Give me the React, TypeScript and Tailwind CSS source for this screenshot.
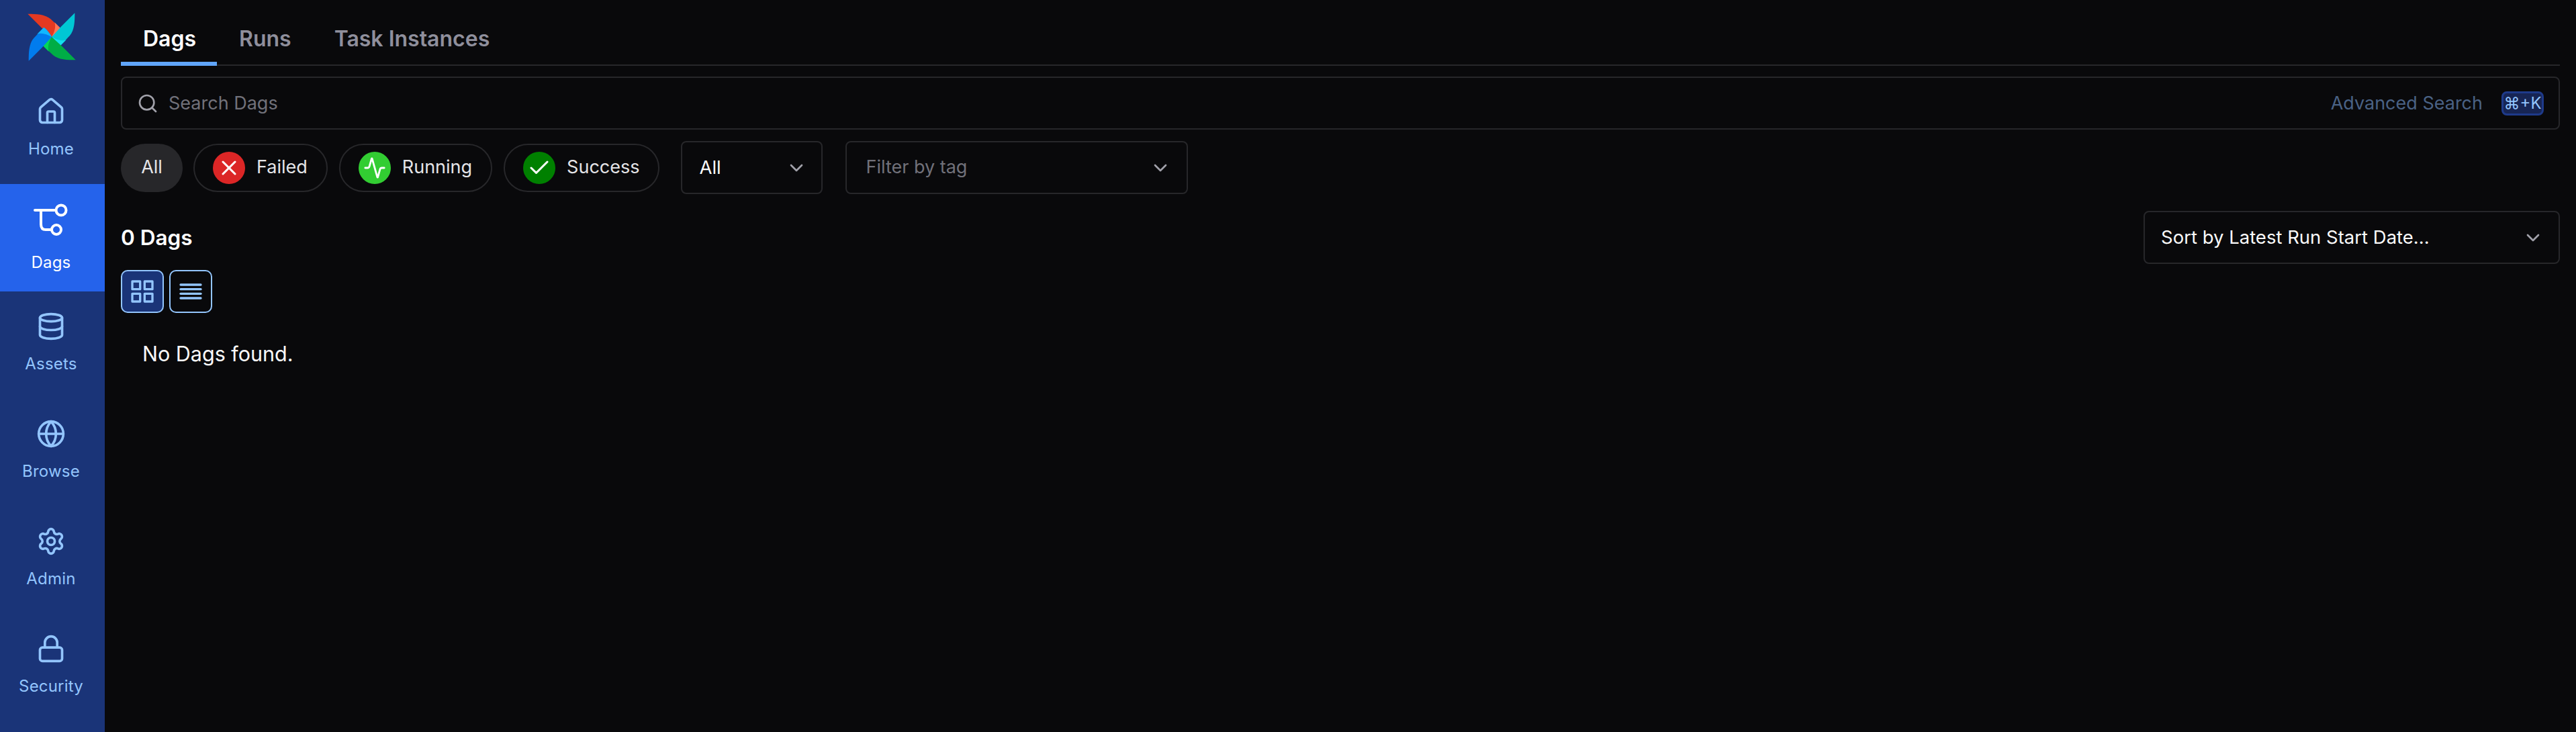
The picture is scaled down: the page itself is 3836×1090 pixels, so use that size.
import React from 'react';
import { Activity, Check, ChevronDown, Database, Globe, House, Lock, Search, Settings, X } from 'lucide-react';
import { FiAlignJustify, FiGrid } from 'react-icons/fi';

const Blade = ({ main, light, angle }: { main: string; light: string; angle: number }) => (
  <g transform={`rotate(${angle})`}>
    <path d="M-107-103C-70-103-30-102-5-80L43-35C30-18 15-8 0 0L-47-43Z" fill={main} />
    <path d="M13-65L43-35C30-18 15-8 0 0C12-20 20-45 13-65Z" fill={light} />
  </g>
);

const Logo = () => (
  <svg width="70" height="70" viewBox="-105 -105 210 210" className="overflow-visible">
    <Blade main="#e43921" light="#ff7557" angle={0} />
    <Blade main="#00c7d4" light="#11e1ee" angle={90} />
    <Blade main="#00ad46" light="#04d659" angle={180} />
    <Blade main="#017cee" light="#11b8ff" angle={270} />
  </svg>
);

const DagsIcon = () => (
  <svg width="52" height="50" viewBox="0 0 52 50" fill="none" stroke="currentColor" strokeWidth="4" strokeLinecap="round" className="shrink-0">
    <path d="M2 12H32" />
    <circle cx="41" cy="12" r="7.5" />
    <path d="M11 12V33C11 38 13 41 18 41H26" />
    <circle cx="34" cy="41" r="7" />
  </svg>
);

const navItems = [
  { label: 'Home', icon: <House size={44} strokeWidth={2} /> },
  { label: 'Dags', icon: <DagsIcon />, active: true },
  { label: 'Assets', icon: <Database size={44} strokeWidth={2} /> },
  { label: 'Browse', icon: <Globe size={44} strokeWidth={2} /> },
  { label: 'Admin', icon: <Settings size={44} strokeWidth={2} /> },
  { label: 'Security', icon: <Lock size={44} strokeWidth={2} /> },
];

const NavItem = ({ label, icon, active }: { label: string; icon: React.ReactNode; active?: boolean }) => (
  <div
    className={`h-[160px] pt-[30px] pr-[4px] flex flex-col items-center ${active ? 'bg-[#2563eb] text-white' : 'text-[#93c5fd]'}`}
  >
    <div className="h-[44px] flex items-center justify-center">{icon}</div>
    <span className={`${active ? 'mt-[27px]' : 'mt-[18px]'} text-[24px] leading-[32px] tracking-[0.2px]`}>{label}</span>
  </div>
);

const Pill = ({ label, color, icon }: { label: string; color: string; icon: React.ReactNode }) => (
  <div className="h-[72px] flex items-center gap-[17px] pl-[27px] pr-[28px] rounded-full border-2 border-[#27272a]">
    <span className={`w-[48px] h-[48px] rounded-full flex items-center justify-center text-white ${color}`}>{icon}</span>
    <span className="text-[27px] text-[#e4e4e7]">{label}</span>
  </div>
);

export default function App() {
  return (
    <div className="flex h-screen w-full overflow-hidden bg-[#09090b] font-['Inter',sans-serif] text-[#fafafa]">
      <aside className="w-[156px] shrink-0 bg-[#1a3478] flex flex-col">
        <div className="h-[114px] flex justify-center pt-[20px] pr-[3px]">
          <Logo />
        </div>
        {navItems.map((item) => (
          <NavItem key={item.label} {...item} />
        ))}
      </aside>

      <main className="flex-1 min-w-0 pl-[24px] pr-[24px]">
        <div className="h-[98px] flex border-b-2 border-[#27272a]">
          <div className="relative w-[143px] pl-[33px] pt-[38px] text-[32px] leading-[40px] font-semibold text-white">
            Dags
            <div className="absolute left-0 right-0 bottom-[-2px] h-[6px] bg-[#60a5fa]" />
          </div>
          <div className="pl-[33px] pr-[32px] pt-[38px] text-[32px] leading-[40px] font-semibold text-[#8f8f9c]">Runs</div>
          <div className="pl-[32px] pt-[38px] text-[32px] leading-[40px] font-semibold text-[#8f8f9c]">Task Instances</div>
        </div>

        <div className="mt-[16px] h-[79px] flex items-center rounded-[8px] border-2 border-[#27272a] pl-[22px] pr-[22px]">
          <Search size={32} strokeWidth={2} className="text-[#a1a1aa]" />
          <span className="ml-[15px] pt-[2px] text-[27px] text-[#71717a]">Search Dags</span>
          <span className="ml-auto pt-[2px] text-[27px] text-[#4a6285]">Advanced Search</span>
          <span className="ml-[28px] w-[63px] h-[36px] flex items-center justify-center rounded-[8px] border-[3px] border-[#1e3a8a] bg-[#172554] text-[24px] leading-none text-[#93c5fd]">
            ⌘+K
          </span>
        </div>

        <div className="mt-[17px] h-[79px] flex items-center">
          <div className="w-[92px] h-[72px] flex items-center justify-center rounded-full bg-[#27272a] text-[27px] text-[#e4e4e7]">
            All
          </div>
          <div className="ml-[16px] flex items-center gap-[17px]">
            <Pill label="Failed" color="bg-[#dc2626]" icon={<X size={36} strokeWidth={2} />} />
            <Pill label="Running" color="bg-[#32cd32]" icon={<Activity size={34} strokeWidth={2} />} />
            <Pill label="Success" color="bg-[#008000]" icon={<Check size={36} strokeWidth={2} />} />
          </div>
          <div className="ml-[32px] w-[211px] h-[79px] flex items-center justify-between rounded-[8px] border-2 border-[#27272a] pl-[25px] pr-[21px]">
            <span className="text-[27.5px] text-[#fafafa]">All</span>
            <ChevronDown size={32} strokeWidth={2} className="text-[#a1a1aa]" />
          </div>
          <div className="ml-[34px] w-[510px] h-[79px] flex items-center justify-between rounded-[8px] border-2 border-[#27272a] pl-[28px] pr-[23px]">
            <span className="text-[27px] text-[#71717a]">Filter by tag</span>
            <ChevronDown size={32} strokeWidth={2} className="text-[#a1a1aa]" />
          </div>
        </div>

        <div className="mt-[25px] flex items-center justify-between">
          <h2 className="pt-[1px] text-[31.5px] font-semibold text-white">0 Dags</h2>
          <div className="w-[620px] h-[79px] flex items-center justify-between rounded-[8px] border-2 border-[#27272a] pl-[24px] pr-[22px]">
            <span className="text-[27.5px] text-[#fafafa]">Sort by Latest Run Start Date...</span>
            <ChevronDown size={32} strokeWidth={2} className="text-[#a1a1aa]" />
          </div>
        </div>

        <div className="mt-[9px] flex gap-[8px]">
          <div className="w-[64px] h-[64px] flex items-center justify-center rounded-[10px] border-2 border-[#93c5fd] bg-[#1a3478] text-[#93c5fd]">
            <FiGrid size={40} />
          </div>
          <div className="w-[64px] h-[64px] flex items-center justify-center rounded-[10px] border-2 border-[#93c5fd] text-[#93c5fd]">
            <FiAlignJustify size={40} />
          </div>
        </div>

        <p className="mt-[41px] pl-[32px] text-[30.5px] leading-[40px] text-[#fafafa]">No Dags found.</p>
      </main>
    </div>
  );
}
